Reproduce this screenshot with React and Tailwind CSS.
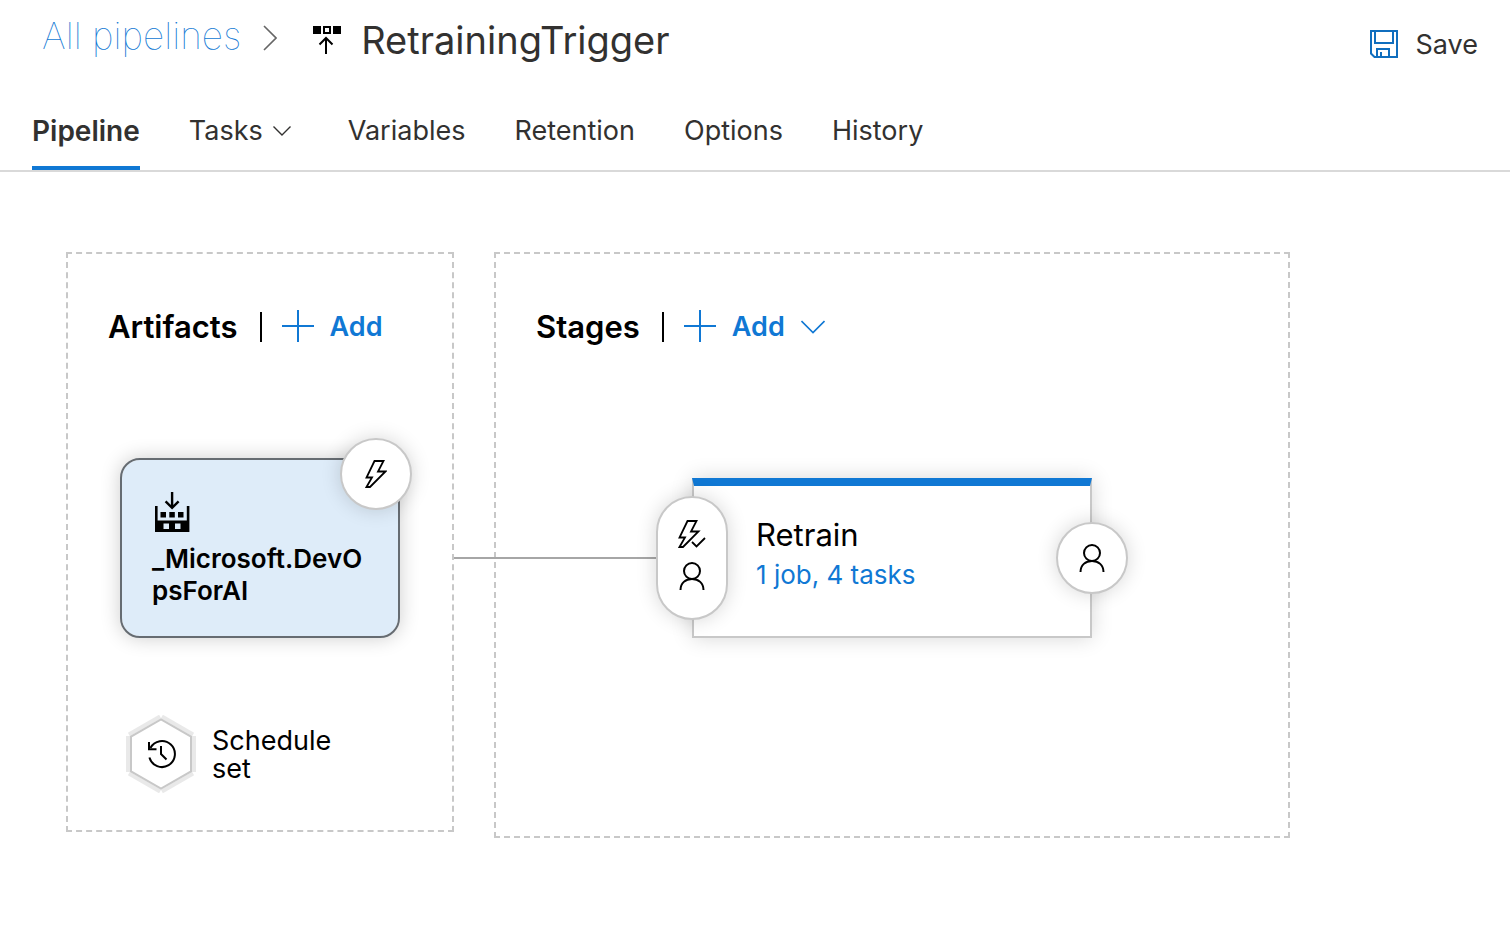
const BOLT = "M9.5 1H18.5L13 11.5H20.5L5 27H1.5L7 17.5H1.5Z";

function BoltIcon() {
  return (
    <svg width="22" height="28" viewBox="0 0 22 28" fill="none" stroke="#000" strokeWidth="1.8" aria-hidden="true">
      <path d={BOLT} />
    </svg>
  );
}

function BoltCheckIcon() {
  return (
    <svg width="28" height="28" viewBox="0 0 28 28" fill="none" stroke="#000" strokeWidth="1.8" aria-hidden="true">
      <path d={BOLT} />
      <path d="M14 20.5L19 26.5L28 17" stroke="#fff" strokeWidth="5" />
      <path d="M14 22L18.5 26.5L27 18" />
    </svg>
  );
}

function PersonIcon() {
  return (
    <svg width="26" height="28" viewBox="0 0 26 28" fill="none" stroke="#000" strokeWidth="2" aria-hidden="true">
      <circle cx="13" cy="9" r="8" />
      <path d="M1.5 28C1.5 21 6.5 17 13 17S24.5 21 24.5 28" />
    </svg>
  );
}

function SaveIcon() {
  return (
    <svg width="28" height="28" viewBox="0 0 28 28" fill="none" stroke="#106ebe" strokeWidth="2" className="mb-0.5" aria-hidden="true">
      <path d="M1 1H27V27H4.5L1 23.5Z" />
      <path d="M5 1V13H23V1" />
      <path d="M7 27V19H19V27M11 22V27" />
    </svg>
  );
}

function ReleaseIcon() {
  return (
    <svg width="28" height="28" viewBox="0 0 28 28" fill="none" stroke="#000" strokeWidth="2" aria-hidden="true">
      <path d="M0 0H8V8H0ZM20 0H28V8H20Z" fill="#000" stroke="none" />
      <path d="M11 1H17V7H11Z" />
      <path d="M13 28V12M6.5 18.5L13 12L19.5 18.5" />
    </svg>
  );
}

function BuildIcon() {
  return (
    <svg width="36" height="40" viewBox="-1 0 36 40" className="ml-0.5" aria-hidden="true">
      <path
        fillRule="evenodd"
        d="M0 14H2.6V28.5H31.8V14H34.4V40H0ZM8.5 31.5V37H14V31.5ZM20 31.5V37H25.5V31.5Z"
      />
      <path d="M5.5 20H11V25.5H5.5ZM14.3 20H19.8V25.5H14.3ZM23 20H28.5V25.5H23Z" />
      <path d="M17.1 0V15M10.6 9.3L17.1 15.8L23.6 9.3" fill="none" stroke="#000" strokeWidth="2.4" />
    </svg>
  );
}

function PlusIcon() {
  return (
    <svg width="32" height="32" viewBox="0 0 32 32" stroke="currentColor" strokeWidth="2" className="mb-0.5" aria-hidden="true">
      <path d="M0 16H32M16 0V32" />
    </svg>
  );
}

function ScheduleIcon() {
  return (
    <svg width="80" height="80" viewBox="0 0 80 80" fill="none" className="shrink-0" aria-hidden="true">
      {[0, 60, 120, 180, 240, 300].map((angle) => (
        <path key={angle} d="M7 22V58" stroke="#e9e9e9" strokeWidth="4" transform={`rotate(${angle} 40 40)`} />
      ))}
      <path d="M40 5.4L70 22.7V57.3L40 74.6L10 57.3V22.7Z" fill="#fff" stroke="#c8c8c8" strokeWidth="2" />
      <g stroke="#000" strokeWidth="2">
        <path d="M28.4 43.6A13 13 0 1 0 29.4 34" />
        <path d="M28 28V35.3H35.5" />
        <path d="M40 32V40L45.5 45.5" />
      </g>
    </svg>
  );
}

const tabs = ["Variables", "Retention", "Options", "History"];
const round =
  "absolute flex items-center justify-center rounded-full border-2 border-[#c8c8c8] bg-white shadow-[0_0_20px_rgba(0,0,0,0.16)]";

function PanelHeader({ title, menu }) {
  return (
    <div className="flex h-10 items-center">
      <h2 className="text-[31px] leading-10 font-semibold">{title}</h2>
      <span className="ml-[22px] h-[30px] w-0.5 bg-black" />
      <button type="button" className="ml-5 flex items-center text-[27px] leading-8 font-semibold text-[#1078d4]">
        <PlusIcon />
        <span className="ml-4">Add</span>
        {menu && (
          <svg width="24" height="14" viewBox="0 0 24 14" fill="none" stroke="currentColor" strokeWidth="1.6" className="ml-4" aria-hidden="true">
            <path d="M0.5 1L12 12.5L23.5 1" />
          </svg>
        )}
      </button>
    </div>
  );
}

export default function App() {
  return (
    <div className="min-h-screen bg-white font-['Inter',sans-serif] text-black antialiased">
      <header className="flex h-[94px] items-start justify-between pr-8 pl-[42px] text-[#323130]">
        <div className="flex h-20 items-center">
          <a href="#pipelines" className="pb-2 text-[37px] leading-12 font-thin text-[#1078d4]">
            All pipelines
          </a>
          <svg width="14" height="26" viewBox="0 0 14 26" fill="none" stroke="#666" strokeWidth="1.6" className="mb-1 ml-[22px]" aria-hidden="true">
            <path d="M1 1L13 13L1 25" />
          </svg>
          <span className="ml-9">
            <ReleaseIcon />
          </span>
          <h1 className="ml-5 text-[38px] leading-12 font-normal">RetrainingTrigger</h1>
        </div>
        <button type="button" className="mt-[21px] flex h-12 items-center gap-[18px] text-[27px] leading-8">
          <SaveIcon />
          Save
        </button>
      </header>

      <nav className="flex gap-[49px] border-b-2 border-[#d9d9d9] px-8 text-[27px] leading-8 text-[#323130]">
        <button type="button" className="h-[76px] border-b-4 border-[#1078d4] pt-0.5 text-[28px] font-semibold">
          Pipeline
        </button>
        <button type="button" className="flex h-[76px] items-center gap-2.5 border-b-4 border-transparent pt-0.5 pr-2">
          Tasks
          <svg width="18" height="10" viewBox="0 0 18 10" fill="none" stroke="currentColor" strokeWidth="1.4" aria-hidden="true">
            <path d="M0.5 0.5L9 9L17.5 0.5" />
          </svg>
        </button>
        {tabs.map((tab) => (
          <button key={tab} type="button" className="h-[76px] border-b-4 border-transparent pt-0.5">
            {tab}
          </button>
        ))}
      </nav>

      <main className="flex items-start gap-10 px-[66px] py-20">
        <section className="w-[388px] shrink-0 border-2 border-dashed border-[#c8c8c8] px-10 pt-[53px] pb-9">
          <PanelHeader title="Artifacts" />
          <div className="relative mt-[111px] ml-3 h-[180px] w-[280px] rounded-[20px] border-2 border-[#666c72] bg-[#deecf9] bg-clip-padding px-[30px] pt-8 shadow-[0_0_20px_rgba(0,0,0,0.2)]">
            <BuildIcon />
            <p className="mt-[11px] text-[26px] leading-8 font-semibold break-all">_Microsoft.DevOpsForAI</p>
            <button type="button" aria-label="Continuous deployment trigger" className={`${round} -top-[22px] -right-3.5 size-[72px]`}>
              <BoltIcon />
            </button>
          </div>
          <div className="mt-[76px] ml-[13px] flex items-center gap-[11px]">
            <ScheduleIcon />
            <p className="w-32 pt-0.5 text-[27px] leading-7">Schedule set</p>
          </div>
        </section>

        <section className="shrink-0 border-2 border-dashed border-[#c8c8c8] px-10 pt-[53px] pb-[198px]">
          <PanelHeader title="Stages" menu />
          <div className="relative mx-[156px] mt-[131px] h-40 w-[400px] border-2 border-t-8 border-[#c8c8c8] border-t-[#1078d4] bg-white px-[62px] pt-[29px] shadow-[0_0_20px_rgba(0,0,0,0.16)]">
            <span className="absolute top-[71px] right-full w-[240px] border-t-2 border-[#a6a6a6]" />
            <h3 className="text-[31px] leading-10 font-normal">Retrain</h3>
            <a href="#tasks" className="block text-[26px] leading-10 text-[#1078d4]">
              1 job, 4 tasks
            </a>
            <button type="button" aria-label="Pre-deployment conditions" className={`${round} top-2.5 -left-[38px] h-[124px] w-[72px] flex-col gap-3.5 pb-1.5`}>
              <BoltCheckIcon />
              <PersonIcon />
            </button>
            <button type="button" aria-label="Post-deployment conditions" className={`${round} top-9 -right-[38px] size-[72px]`}>
              <PersonIcon />
            </button>
          </div>
        </section>
      </main>
    </div>
  );
}
